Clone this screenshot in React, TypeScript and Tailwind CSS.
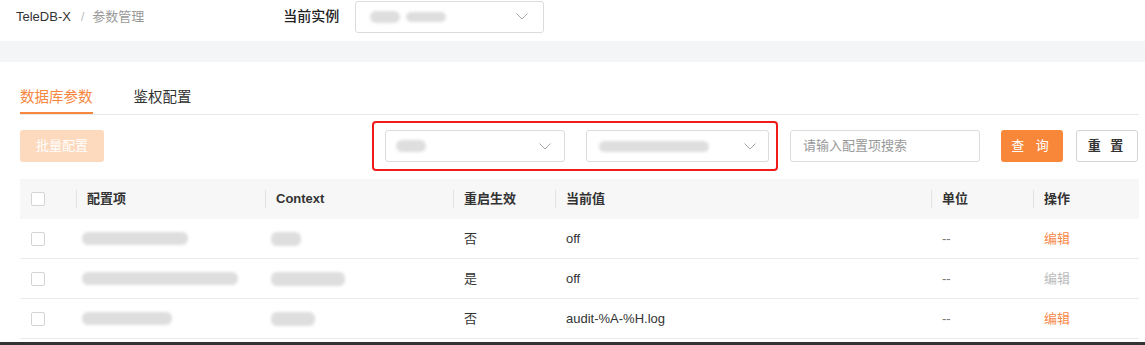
import React from "react";

const FONT = {
  fontFamily: '"Liberation Sans", Arial, "Noto Sans CJK SC", sans-serif',
};

function Chevron() {
  return (
    <svg width="12" height="7" viewBox="0 0 12 7" className="shrink-0">
      <polyline
        points="0.5,0.5 6,6 11.5,0.5"
        fill="none"
        stroke="#a8a8a8"
        strokeWidth="1"
      />
    </svg>
  );
}

function Blob({ w, h = 12, ml = 0 }: { w: number; h?: number; ml?: number }) {
  return (
    <div
      className="rounded-[6px] bg-[#dedede] blur-[1.5px]"
      style={{ width: w, height: h, marginLeft: ml }}
    />
  );
}

function Checkbox() {
  return (
    <div className="h-[14px] w-[14px] rounded-[2px] border border-[#d4d4d4] bg-white" />
  );
}

const cols = "grid-cols-[56px_189px_188px_102px_376px_102px_106px]";

function HeaderCell({ children }: { children: React.ReactNode }) {
  return (
    <div className="relative flex items-center pl-[11px]">
      <div className="absolute left-0 top-[11px] h-[18px] w-px bg-[#e3e3e3]" />
      {children}
    </div>
  );
}

type Row = {
  nameW: number;
  ctxW: number;
  restart: string;
  value: string;
  editable: boolean;
};

const rows: Row[] = [
  { nameW: 106, ctxW: 30, restart: "否", value: "off", editable: true },
  { nameW: 156, ctxW: 74, restart: "是", value: "off", editable: false },
  { nameW: 90, ctxW: 44, restart: "否", value: "audit-%A-%H.log", editable: true },
];

export default function App() {
  return (
    <div
      className="h-[345px] w-[1145px] overflow-hidden bg-white text-[13px] text-[#333]"
      style={FONT}
    >
      {/* top bar */}
      <div className="flex h-[41px] items-start">
        <div className="mt-[1px] flex h-[31px] items-center pl-[16px]">
          <span className="text-[13px] text-[#333]">TeleDB-X</span>
          <span className="ml-[10px] text-[12px] text-[#bbb]">/</span>
          <span className="ml-[8px] text-[13px] text-[#999]">参数管理</span>
          <span className="ml-[139px] text-[14px] font-medium text-[#222]">
            当前实例
          </span>
          <div className="ml-[16px] flex h-[32px] w-[189px] items-center justify-between rounded-[3px] border border-[#dcdcdc] pl-[14px] pr-[15px]">
            <div className="flex items-center">
              <Blob w={30} h={12} />
              <Blob w={40} h={10} ml={6} />
            </div>
            <Chevron />
          </div>
        </div>
      </div>

      {/* gray band */}
      <div className="h-[21px] bg-[#f4f5f7]" />

      {/* main */}
      <div className="pl-[20px] pr-[6px] pt-[18px]">
        {/* tabs */}
        <div className="flex gap-[41px] border-b border-[#e8e8e8]">
          <div className="-mb-px flex h-[34px] items-center border-b-2 border-[#f7873f] pt-[3px] text-[14.5px] text-[#f7873f]">
            数据库参数
          </div>
          <div className="flex h-[34px] items-center pt-[1px] text-[14.5px] text-[#333]">
            鉴权配置
          </div>
        </div>

        {/* toolbar */}
        <div className="mt-[6px] flex h-[50px] items-center">
          <button className="flex h-[32px] w-[84px] items-center justify-center rounded-[3px] bg-[#fdd9bd] text-[13px] text-white">
            批量配置
          </button>
          <div className="ml-[268px] flex h-[50px] w-[406px] items-center rounded-[4px] border-2 border-[#f01c1c] pl-[11px] pr-[7px]">
            <div className="flex h-[32px] w-[180px] items-center justify-between rounded-[3px] border border-[#dcdcdc] pl-[10px] pr-[13px]">
              <div className="flex items-center">
                <Blob w={30} h={12} />
              </div>
              <Chevron />
            </div>
            <div className="ml-[21px] flex h-[32px] w-[183px] items-center justify-between rounded-[3px] border border-[#dcdcdc] pl-[12px] pr-[12px]">
              <div className="flex items-center">
                <Blob w={110} h={11} />
              </div>
              <Chevron />
            </div>
          </div>
          <div className="ml-[12px] flex h-[32px] w-[190px] items-center rounded-[3px] border border-[#dcdcdc] pl-[12px] text-[13px] text-[#999]">
            请输入配置项搜索
          </div>
          <button className="ml-[21px] flex h-[32px] w-[62px] items-center justify-center rounded-[3px] bg-[#f8873a] text-[13px] tracking-[4px] text-white">
            查 询
          </button>
          <button className="ml-[13px] flex h-[32px] w-[62px] items-center justify-center rounded-[3px] border border-[#d4d4d4] bg-white text-[13px] font-bold tracking-[3px] text-[#333]">
            重 置
          </button>
        </div>

        {/* table */}
        <div className="mt-[8px] w-[1119px]">
          <div className={`grid h-[40px] ${cols} bg-[#f7f7f7] font-bold text-[#333]`}>
            <div className="flex items-center pl-[11px]">
              <Checkbox />
            </div>
            <HeaderCell>配置项</HeaderCell>
            <HeaderCell>Context</HeaderCell>
            <HeaderCell>重启生效</HeaderCell>
            <HeaderCell>当前值</HeaderCell>
            <HeaderCell>单位</HeaderCell>
            <HeaderCell>操作</HeaderCell>
          </div>
          {rows.map((r, i) => (
            <div
              key={i}
              className={`grid h-[40px] ${cols} border-b border-[#ebebeb] text-[#333]`}
            >
              <div className="flex items-center pl-[11px]">
                <Checkbox />
              </div>
              <div className="flex items-center pl-[6px]">
                <Blob w={r.nameW} h={13} />
              </div>
              <div className="flex items-center pl-[6px]">
                <Blob w={r.ctxW} h={14} />
              </div>
              <div className="flex items-center pl-[11px]">{r.restart}</div>
              <div className="flex items-center pl-[11px]">{r.value}</div>
              <div className="flex items-center pl-[11px] text-[#777]">--</div>
              <div
                className={`flex items-center pl-[11px] ${
                  r.editable ? "text-[#f7894a]" : "text-[#bbb]"
                }`}
              >
                编辑
              </div>
            </div>
          ))}
        </div>
      </div>

      {/* bottom dark strip */}
      <div className="mt-[3px] h-[3px] bg-[#333]" />
    </div>
  );
}
